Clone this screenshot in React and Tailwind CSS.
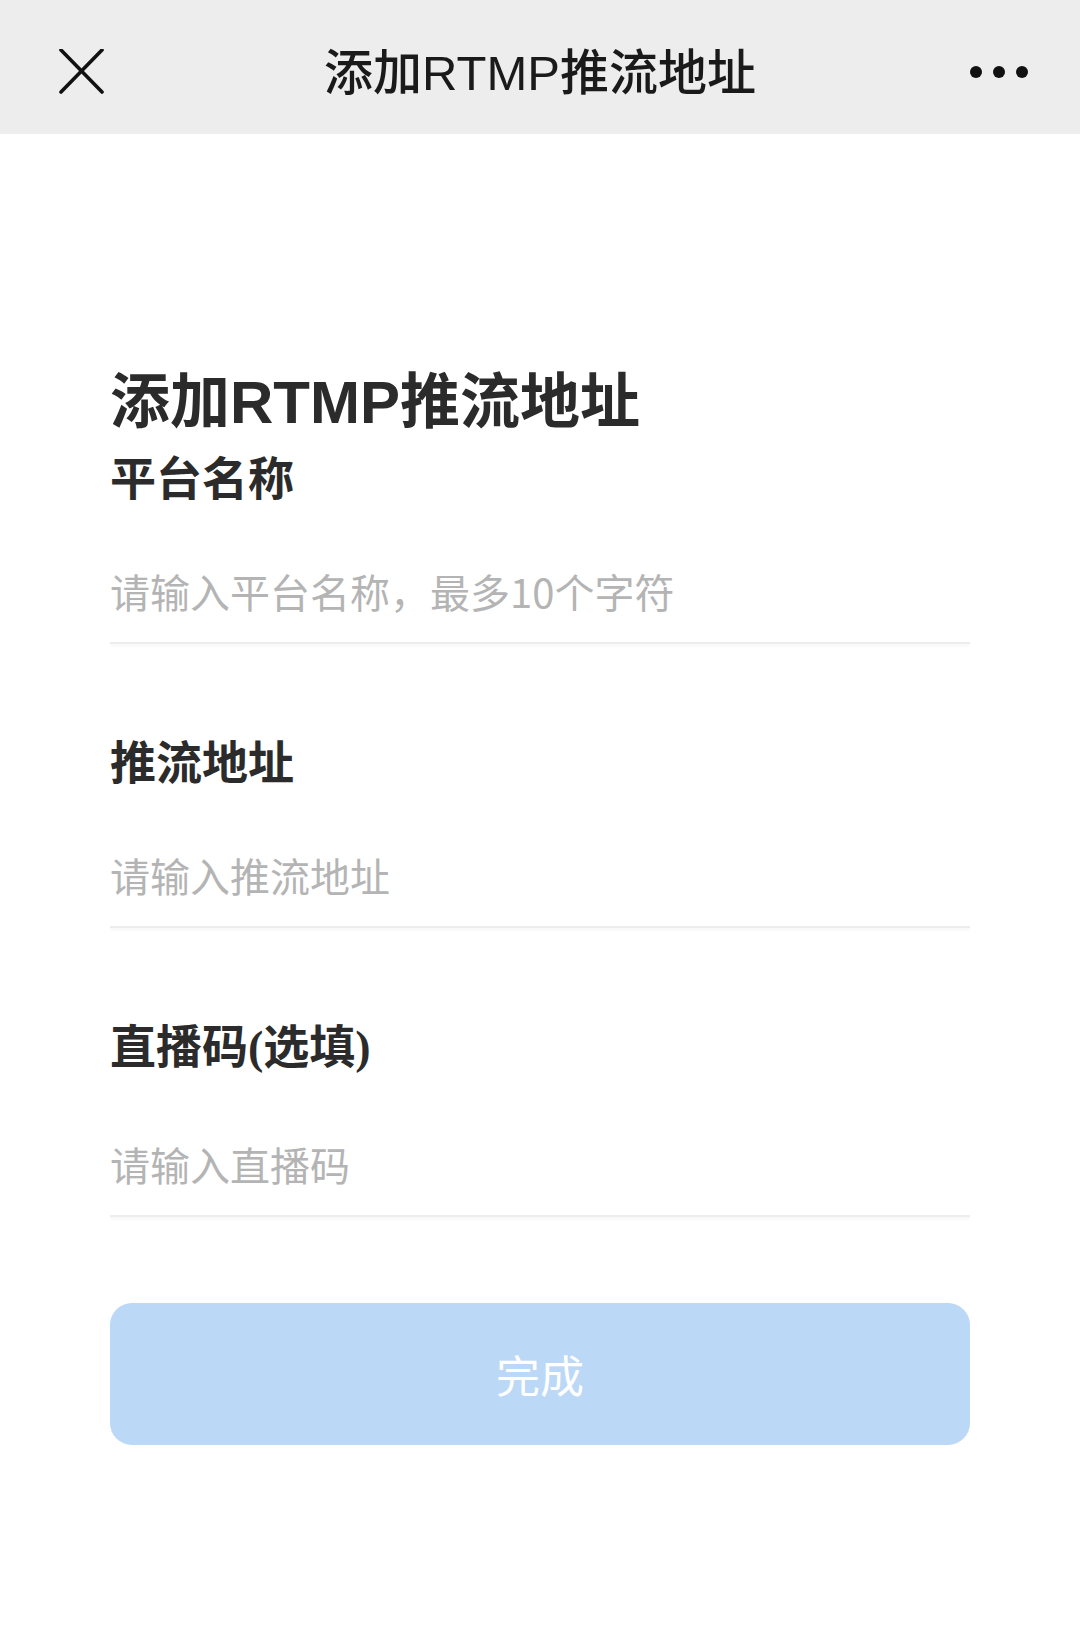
import React from 'react';

const font = "font-['Liberation_Sans','Noto_Sans_CJK_SC',sans-serif]";
const cjk = "font-['Noto_Sans_CJK_SC',sans-serif]";

function Field({ label, placeholder }) {
  return (
    <div className="flex flex-col">
      <div className={`text-[46px] leading-[56px] font-bold text-[#2b2b2b] ${cjk}`}>{label}</div>
      <input
        readOnly
        placeholder={placeholder}
        className={`mt-[60px] h-[56px] w-full bg-transparent text-[40px] leading-[56px] outline-none placeholder:text-[#b4b4b4] ${cjk}`}
      />
      <div className="mt-[23px] h-[2px] bg-[#ededed] shadow-[0_2px_3px_rgba(0,0,0,0.05)]" />
    </div>
  );
}

export default function App() {
  return (
    <div className={`min-h-[1645px] w-[1080px] bg-white ${font}`}>
      {/* Nav bar */}
      <div className="relative flex h-[134px] items-center justify-center bg-[#ededed]">
        <svg className="absolute left-[59px] top-[49px]" width="45" height="45" viewBox="0 0 45 45">
          <path d="M2 1 L43 43 M43 1 L2 43" stroke="#111" strokeWidth="3.6" strokeLinecap="round" />
        </svg>
        <div className="mt-[13px] text-[49px] font-medium leading-none text-[#1a1a1a]">
          添加RTMP推流地址
        </div>
        <div className="absolute right-[52px] top-[66px] flex gap-[11px]">
          <span className="h-[12px] w-[12px] rounded-full bg-[#111]" />
          <span className="h-[12px] w-[12px] rounded-full bg-[#111]" />
          <span className="h-[12px] w-[12px] rounded-full bg-[#111]" />
        </div>
      </div>

      {/* Form */}
      <div className="px-[110px]">
        <div className="mt-[237px] text-[60px] leading-[64px] font-bold text-[#2b2b2b]">
          添加RTMP推流地址
        </div>
        <div className="mt-[12px] flex flex-col gap-[87px]">
          <Field label="平台名称" placeholder="请输入平台名称，最多10个字符" />
          <Field label="推流地址" placeholder="请输入推流地址" />
          <Field
            label={
              <>
                直播码<span className="font-['Liberation_Serif',serif]">(</span>选填
                <span className="font-['Liberation_Serif',serif]">)</span>
              </>
            }
            placeholder="请输入直播码"
          />
        </div>
        <button className={`mt-[86px] flex h-[142px] w-full items-center justify-center rounded-[22px] bg-[#bbd8f7] text-[44px] text-white ${cjk}`}>
          完成
        </button>
      </div>
    </div>
  );
}
